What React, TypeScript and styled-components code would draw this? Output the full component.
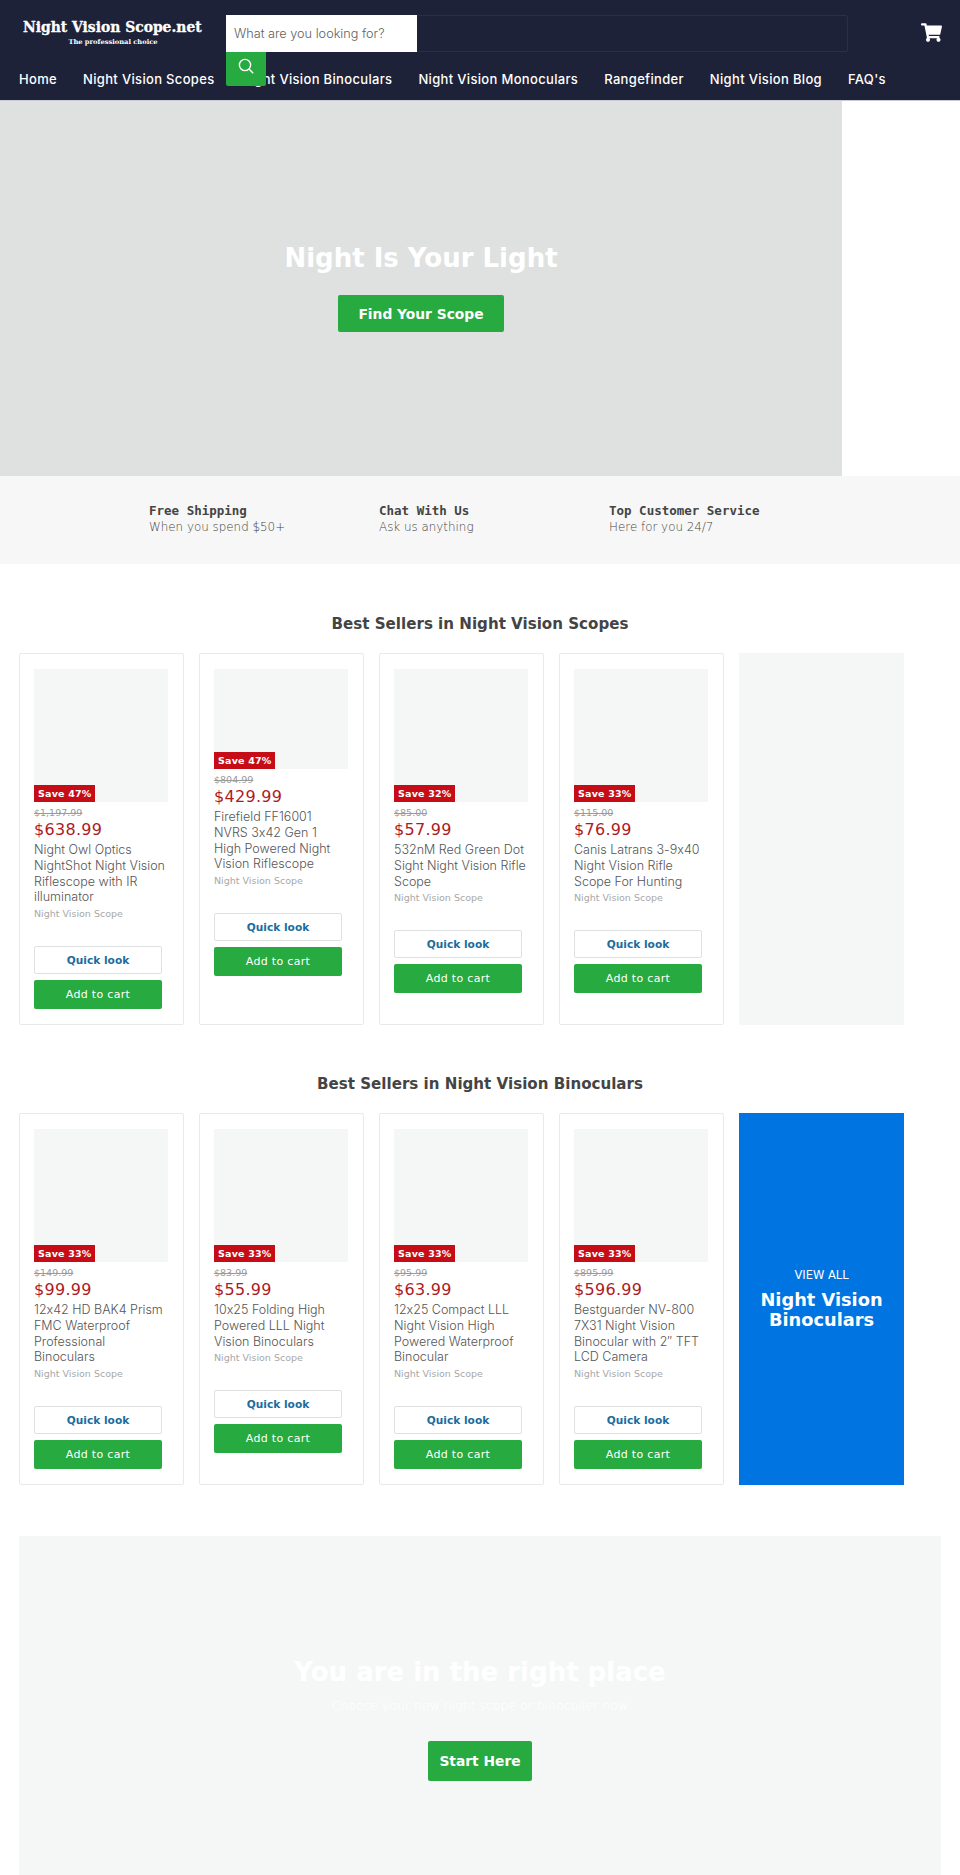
import React from "react";
import styled, { createGlobalStyle } from "styled-components";
import { FaShoppingCart } from "react-icons/fa";

const GlobalStyle = createGlobalStyle`
  html, body {
    margin: 0;
    padding: 0;
    background: #fff;
    font-family: "DejaVu Sans", sans-serif;
    color: #3f3f3f;
  }
  * {
    box-sizing: border-box;
  }
`;

const Page = styled.div`
  width: 960px;
  height: 1875px;
  overflow: hidden;
`;

const Header = styled.header`
  position: relative;
  height: 101px;
  background: #1e2238;
  border-bottom: 1px solid #c9ccd2;
`;

const TopRow = styled.div`
  display: flex;
  height: 67px;
  padding: 15px 0 0 23px;
`;

const Logo = styled.div`
  width: 203px;
  padding-top: 2px;
  font-family: "DejaVu Serif", serif;
  color: #fff;
`;

const LogoName = styled.div`
  width: 180px;
  font-size: 13.9px;
  line-height: 20px;
  font-weight: 700;
  white-space: nowrap;
  -webkit-text-stroke: 0.3px #fff;
`;

const LogoTag = styled.div`
  width: 180px;
  font-size: 6.7px;
  line-height: 10px;
  font-weight: 700;
  text-align: center;
`;

const SearchBox = styled.div`
  width: 622px;
  height: 37px;
  border: 1px solid #2a2f49;
  border-radius: 2px;
`;

const SearchInput = styled.div`
  width: 191px;
  height: 37px;
  margin: -1px 0 0 -1px;
  padding-left: 8px;
  background: #fff;
  color: #5f5f5f;
  font-family: Inter, sans-serif;
  font-size: 12.7px;
  font-weight: 300;
  line-height: 37px;
`;

const SearchButton = styled.div`
  position: absolute;
  left: 226px;
  top: 52px;
  width: 40px;
  height: 34px;
  display: flex;
  align-items: center;
  justify-content: center;
  padding-bottom: 6px;
  background: #27aa3f;
  border-radius: 0 0 2px 2px;
`;

const CartWrap = styled.div`
  margin-left: 73px;
  padding-top: 7px;
  color: #fff;
`;

const Nav = styled.nav`
  display: flex;
  gap: 26px;
  padding-left: 19px;
`;

const NavItem = styled.div`
  color: #fff;
  font-family: Inter, sans-serif;
  font-size: 13px;
  font-weight: 500;
  line-height: 24px;
  letter-spacing: 0.33px;
  white-space: nowrap;
`;

const Hero = styled.section`
  width: 842px;
  height: 375px;
  background: #dfe1e0;
  display: flex;
  flex-direction: column;
  align-items: center;
  padding-top: 139px;
`;

const HeroTitle = styled.h1`
  margin: 0 0 19px;
  color: #fff;
  font-size: 26px;
  line-height: 36px;
  font-weight: 700;
`;

const BigButton = styled.div<{ $w: number; $h: number }>`
  width: ${({ $w }) => $w}px;
  height: ${({ $h }) => $h}px;
  display: flex;
  align-items: center;
  justify-content: center;
  background: #27aa3f;
  border-radius: 2px;
  color: #fff;
  font-size: 13.8px;
  font-weight: 700;
`;

const Features = styled.section`
  height: 88px;
  background: #f7f7f7;
  display: flex;
  padding: 27px 0 0 149px;
`;

const Feature = styled.div`
  width: 230px;
`;

const FeatureTitle = styled.div`
  font-family: "DejaVu Sans Mono", monospace;
  font-weight: 700;
  font-size: 12.5px;
  line-height: 16px;
  color: #444;
`;

const FeatureText = styled.div`
  font-weight: 200;
  font-size: 11.9px;
  line-height: 17px;
  color: #444;
`;

const SectionTitle = styled.h2<{ $top: number }>`
  margin: ${({ $top }) => $top}px 0 0;
  text-align: center;
  font-size: 15.1px;
  line-height: 24px;
  font-weight: 700;
  color: #444;
`;

const Row = styled.div`
  display: flex;
  gap: 15px;
  height: 372px;
  margin-top: 17px;
  padding-left: 19px;
`;

const Card = styled.article`
  width: 165px;
  padding: 15px 14px 0;
  border: 1px solid #e8e9e9;
  border-radius: 2px;
`;

const Thumb = styled.div<{ $h: number }>`
  position: relative;
  width: 134px;
  height: ${({ $h }) => $h}px;
  background: #f5f7f7;
`;

const Badge = styled.span`
  position: absolute;
  left: 0;
  bottom: 0;
  height: 17px;
  width: 61px;
  padding-left: 4px;
  background: #c60d17;
  color: #fff;
  font-size: 9.5px;
  line-height: 17px;
  font-weight: 700;
  letter-spacing: 0.2px;
  white-space: nowrap;
`;

const OldPrice = styled.div`
  margin-top: 4px;
  color: #9a9a9a;
  font-size: 9.5px;
  line-height: 14px;
  text-decoration: line-through;
`;

const Price = styled.div`
  color: #ae1b1f;
  font-size: 16px;
  line-height: 20px;
  letter-spacing: 0.3px;
`;

const Title = styled.div`
  max-width: 133px;
  margin-top: 2px;
  color: #555;
  font-family: Inter, sans-serif;
  font-feature-settings: "calt" 0;
  font-size: 12.5px;
  line-height: 15.8px;
  font-weight: 300;
`;

const Vendor = styled.div`
  margin-top: 1px;
  color: #a8a8a8;
  font-size: 9.5px;
  line-height: 16px;
`;

const QuickLook = styled.div`
  width: 128px;
  height: 28px;
  margin-top: 24px;
  display: flex;
  align-items: center;
  justify-content: center;
  background: #fff;
  border: 1px solid #dfe1e1;
  border-radius: 2px;
  color: #1b6d9e;
  font-size: 10.6px;
  font-weight: 700;
`;

const AddToCart = styled.div`
  width: 128px;
  height: 29px;
  margin-top: 6px;
  display: flex;
  align-items: center;
  justify-content: center;
  background: #27aa3f;
  border-radius: 2px;
  color: #fff;
  font-size: 11px;
  letter-spacing: 0.3px;
`;

const EmptyPanel = styled.div`
  width: 165px;
  background: #f5f7f7;
`;

const ViewAll = styled.div`
  width: 165px;
  padding-top: 152px;
  background: #0074e0;
  color: #fff;
  text-align: center;
`;

const ViewAllLabel = styled.div`
  font-size: 11.5px;
  line-height: 20px;
`;

const ViewAllTitle = styled.div`
  margin-top: 5px;
  font-size: 17.8px;
  line-height: 20px;
  font-weight: 700;
`;

const Promo = styled.section`
  height: 340px;
  margin: 51px 19px 0;
  padding-top: 120px;
  background: #f5f7f7;
  display: flex;
  flex-direction: column;
  align-items: center;
`;

const PromoTitle = styled.h2`
  margin: 0;
  color: #fff;
  font-size: 26px;
  line-height: 32px;
  font-weight: 700;
`;

const PromoText = styled.p`
  margin: 9px 0 26px;
  color: #fff;
  font-size: 12.5px;
  line-height: 18px;
  font-weight: 200;
`;

const NAV_ITEMS = [
  "Home",
  "Night Vision Scopes",
  "Night Vision Binoculars",
  "Night Vision Monoculars",
  "Rangefinder",
  "Night Vision Blog",
  "FAQ's",
];

const FEATURES = [
  ["Free Shipping", "When you spend $50+"],
  ["Chat With Us", "Ask us anything"],
  ["Top Customer Service", "Here for you 24/7"],
];

interface Product {
  save: number;
  old: string;
  price: string;
  title: string;
  thumb?: number;
}

const SCOPES: Product[] = [
  {
    save: 47,
    old: "$1,197.99",
    price: "$638.99",
    title: "Night Owl Optics NightShot Night Vision Riflescope with IR illuminator",
  },
  {
    save: 47,
    old: "$804.99",
    price: "$429.99",
    title: "Firefield FF16001 NVRS 3x42 Gen 1 High Powered Night Vision Riflescope",
    thumb: 100,
  },
  {
    save: 32,
    old: "$85.00",
    price: "$57.99",
    title: "532nM Red Green Dot Sight Night Vision Rifle Scope",
  },
  {
    save: 33,
    old: "$115.00",
    price: "$76.99",
    title: "Canis Latrans 3-9x40 Night Vision Rifle Scope For Hunting",
  },
];

const BINOCULARS: Product[] = [
  {
    save: 33,
    old: "$149.99",
    price: "$99.99",
    title: "12x42 HD BAK4 Prism FMC Waterproof Professional Binoculars",
  },
  {
    save: 33,
    old: "$83.99",
    price: "$55.99",
    title: "10x25 Folding High Powered LLL Night Vision Binoculars",
  },
  {
    save: 33,
    old: "$95.99",
    price: "$63.99",
    title: "12x25 Compact LLL Night Vision High Powered Waterproof Binocular",
  },
  {
    save: 33,
    old: "$895.99",
    price: "$596.99",
    title: "Bestguarder NV-800 7X31 Night Vision Binocular with 2\u2033 TFT LCD Camera",
  },
];

function ProductCard({ save, old, price, title, thumb = 133 }: Product) {
  return (
    <Card>
      <Thumb $h={thumb}>
        <Badge>Save {save}%</Badge>
      </Thumb>
      <OldPrice>{old}</OldPrice>
      <Price>{price}</Price>
      <Title>{title}</Title>
      <Vendor>Night Vision Scope</Vendor>
      <QuickLook>Quick look</QuickLook>
      <AddToCart>Add to cart</AddToCart>
    </Card>
  );
}

export default function App() {
  return (
    <Page>
      <GlobalStyle />
      <Header>
        <TopRow>
          <Logo>
            <LogoName>Night Vision Scope.net</LogoName>
            <LogoTag>The professional choice</LogoTag>
          </Logo>
          <SearchBox>
            <SearchInput>What are you looking for?</SearchInput>
          </SearchBox>
          <CartWrap>
            <FaShoppingCart size={21} />
          </CartWrap>
        </TopRow>
        <Nav>
          {NAV_ITEMS.map((item) => (
            <NavItem key={item}>{item}</NavItem>
          ))}
        </Nav>
        <SearchButton>
          <svg width="16" height="16" viewBox="0 0 16 16" fill="none" stroke="#fff" strokeWidth="1.4">
            <circle cx="7" cy="7" r="5.6" />
            <path d="M11 11l4.2 4.2" />
          </svg>
        </SearchButton>
      </Header>
      <Hero>
        <HeroTitle>Night Is Your Light</HeroTitle>
        <BigButton $w={166} $h={37}>Find Your Scope</BigButton>
      </Hero>
      <Features>
        {FEATURES.map(([head, text]) => (
          <Feature key={head}>
            <FeatureTitle>{head}</FeatureTitle>
            <FeatureText>{text}</FeatureText>
          </Feature>
        ))}
      </Features>
      <SectionTitle $top={48}>Best Sellers in Night Vision Scopes</SectionTitle>
      <Row>
        {SCOPES.map((p) => (
          <ProductCard key={p.title} {...p} />
        ))}
        <EmptyPanel />
      </Row>
      <SectionTitle $top={47}>Best Sellers in Night Vision Binoculars</SectionTitle>
      <Row>
        {BINOCULARS.map((p) => (
          <ProductCard key={p.title} {...p} />
        ))}
        <ViewAll>
          <ViewAllLabel>VIEW ALL</ViewAllLabel>
          <ViewAllTitle>Night Vision Binoculars</ViewAllTitle>
        </ViewAll>
      </Row>
      <Promo>
        <PromoTitle>You are in the right place</PromoTitle>
        <PromoText>Choose your new night scope or binoculler now</PromoText>
        <BigButton $w={104} $h={40}>Start Here</BigButton>
      </Promo>
    </Page>
  );
}
